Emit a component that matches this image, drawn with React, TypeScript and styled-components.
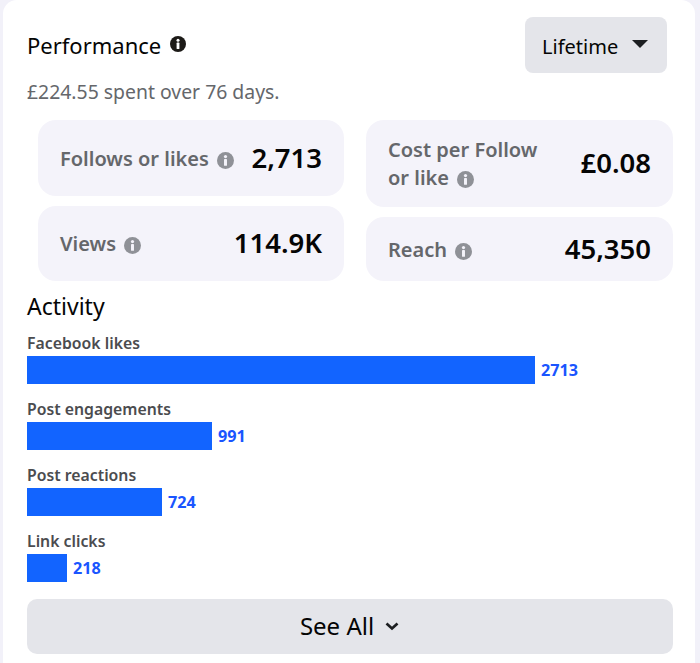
import React from 'react'
import styled, { createGlobalStyle } from 'styled-components'

const GlobalStyle = createGlobalStyle`
  html, body {
    margin: 0;
    padding: 0;
    height: 663px;
    overflow: hidden;
    background: #f2f1f9;
    font-family: "Noto Sans", "Open Sans", sans-serif;
  }
`

const Card = styled.div`
  box-sizing: border-box;
  width: 692px;
  height: 663px;
  margin-left: 3px;
  padding: 17px 22px 0 24px;
  background: #fff;
  border-radius: 14px 14px 0 0;
`

const Header = styled.div`
  display: flex;
  justify-content: space-between;
  align-items: flex-start;
  padding-right: 6px;
`

const TitleRow = styled.div`
  display: flex;
  align-items: center;
  gap: 9px;
  height: 56px;
  padding-top: 0;
  box-sizing: border-box;
`

const Title = styled.h2`
  margin: 0;
  font-size: 22px;
  font-weight: 400;
  color: #050505;
`

const TitleInfo = styled.span`
  display: flex;
  margin-bottom: 3px;
`

const DropButton = styled.button`
  display: flex;
  align-items: center;
  gap: 14px;
  width: 142px;
  height: 56px;
  padding: 2px 0 0 17px;
  border: 0;
  border-radius: 8px;
  background: #e4e5ea;
  color: #050505;
  font: 400 20px "Noto Sans", sans-serif;
`

const Caret = styled.span`
  width: 0;
  height: 0;
  margin-top: -5px;
  border-left: 8px solid transparent;
  border-right: 8px solid transparent;
  border-top: 8px solid #1c1e21;
`

const Sub = styled.p`
  margin: 5px 0 0;
  height: 28px;
  font-size: 19.4px;
  line-height: 28px;
  color: #65676b;
`

const Stats = styled.div`
  display: grid;
  grid-template-columns: 306px 307px;
  column-gap: 22px;
  margin: 14px 0 0 11px;
`

const StatCol = styled.div`
  display: flex;
  flex-direction: column;
  gap: 10px;
`

const Stat = styled.div<{ $h: number }>`
  box-sizing: border-box;
  height: ${(p) => p.$h}px;
  display: flex;
  align-items: center;
  justify-content: space-between;
  padding: 0 22px;
  background: #f4f3fa;
  border-radius: 18px;
`

const StatLabel = styled.div`
  padding-top: 4px;
  font-size: 20px;
  font-weight: 600;
  line-height: 28px;
  color: #65676b;
`

const StatValue = styled.div`
  padding-bottom: 2px;
  font-size: 27.5px;
  font-weight: 600;
  color: #050505;
`

const InfoWrap = styled.span`
  display: inline-block;
  margin-left: 8px;
  vertical-align: -3px;
`

const Heading = styled.h3`
  margin: 8px 0 0;
  height: 34px;
  font-size: 23px;
  line-height: 34px;
  font-weight: 400;
  color: #050505;
`

const Activity = styled.div`
  margin-top: 9px;
  display: flex;
  flex-direction: column;
  gap: 14px;
`

const Metric = styled.div``

const MetricLabel = styled.div`
  height: 20px;
  margin-bottom: 4px;
  font-size: 15.8px;
  line-height: 22px;
  font-weight: 600;
  color: #4b4c4f;
`

const BarRow = styled.div`
  display: flex;
  align-items: center;
  gap: 6px;
`

const Bar = styled.div`
  height: 28px;
  background: #1264ff;
`

const BarValue = styled.span`
  font-size: 16.2px;
  font-weight: 700;
  color: #1a55ff;
`

const SeeAll = styled.button`
  display: flex;
  align-items: center;
  justify-content: center;
  gap: 10px;
  box-sizing: border-box;
  width: 646px;
  height: 55px;
  margin-top: 17px;
  padding: 0 0 2px;
  border: 0;
  border-radius: 10px;
  background: #e4e5ea;
  color: #050505;
  font: 400 24px "Noto Sans", sans-serif;
`

const Info = ({ size, color, hole }: { size: number; color: string; hole: string }) => (
  <svg width={size} height={size} viewBox="0 0 16 16">
    <circle cx="8" cy="8" r="8" fill={color} />
    <circle cx="8" cy="4.3" r="1.5" fill={hole} />
    <rect x="6.6" y="6.6" width="2.8" height="6.4" rx="0.6" fill={hole} />
  </svg>
)

const Chevron = () => (
  <svg width="16" height="16" viewBox="0 0 16 16">
    <path d="M2.5 5.5 L8 10.5 L13.5 5.5" fill="none" stroke="#1c1e21" strokeWidth="2.7" />
  </svg>
)

const StatInfo = () => (
  <InfoWrap>
    <Info size={17} color="#8f9197" hole="#f4f3fa" />
  </InfoWrap>
)

const metrics = [
  { label: 'Facebook likes', value: 2713 },
  { label: 'Post engagements', value: 991 },
  { label: 'Post reactions', value: 724 },
  { label: 'Link clicks', value: 218 },
]

const App = () => (
  <>
    <GlobalStyle />
    <Card>
      <Header>
        <TitleRow>
          <Title>Performance</Title>
          <TitleInfo>
            <Info size={16} color="#1c1a17" hole="#fff" />
          </TitleInfo>
        </TitleRow>
        <DropButton>
          Lifetime
          <Caret />
        </DropButton>
      </Header>
      <Sub>£224.55 spent over 76 days.</Sub>
      <Stats>
        <StatCol>
          <Stat $h={76}>
            <StatLabel>
              Follows or likes
              <StatInfo />
            </StatLabel>
            <StatValue>2,713</StatValue>
          </Stat>
          <Stat $h={75}>
            <StatLabel>
              Views
              <StatInfo />
            </StatLabel>
            <StatValue>114.9K</StatValue>
          </Stat>
        </StatCol>
        <StatCol>
          <Stat $h={87}>
            <StatLabel>
              Cost per Follow
              <br />
              or like
              <StatInfo />
            </StatLabel>
            <StatValue>£0.08</StatValue>
          </Stat>
          <Stat $h={64}>
            <StatLabel>
              Reach
              <StatInfo />
            </StatLabel>
            <StatValue>45,350</StatValue>
          </Stat>
        </StatCol>
      </Stats>
      <Heading>Activity</Heading>
      <Activity>
        {metrics.map((m) => (
          <Metric key={m.label}>
            <MetricLabel>{m.label}</MetricLabel>
            <BarRow>
              <Bar style={{ width: Math.floor((m.value / 2713) * 508) }} />
              <BarValue>{m.value}</BarValue>
            </BarRow>
          </Metric>
        ))}
      </Activity>
      <SeeAll>
        See All
        <Chevron />
      </SeeAll>
    </Card>
  </>
)

export default App
